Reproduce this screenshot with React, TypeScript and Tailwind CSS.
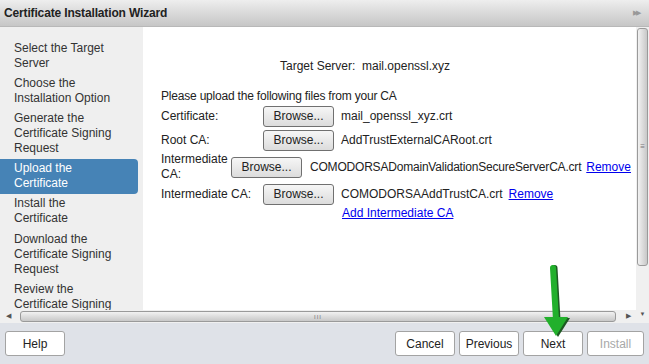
import React from 'react';

const steps: { label: string; active?: boolean }[] = [
  { label: 'Select the Target Server' },
  { label: 'Choose the Installation Option' },
  { label: 'Generate the Certificate Signing Request' },
  { label: 'Upload the Certificate', active: true },
  { label: 'Install the Certificate' },
  { label: 'Download the Certificate Signing Request' },
  { label: 'Review the Certificate Signing Request' },
];

const BrowseButton: React.FC = () => (
  <button className="h-[21px] w-[71px] shrink-0 rounded-[3px] border border-[#707070] bg-gradient-to-b from-[#f6f6f6] to-[#dcdcdc] text-[12px] text-[#222]">
    Browse...
  </button>
);

const FooterButton: React.FC<{ label: string; w: string; disabled?: boolean }> = ({ label, w, disabled }) => (
  <button
    className={`h-[25px] ${w} rounded-[3px] border border-[#a3a3a3] bg-white text-[12px] ${
      disabled ? 'text-[#a8a8a8]' : 'text-[#222]'
    }`}
  >
    {label}
  </button>
);

const App: React.FC = () => {
  return (
    <div
      className="relative flex h-[364px] w-[649px] flex-col overflow-hidden bg-white text-[12px] text-[#222]"
      style={{ fontFamily: '"Liberation Sans", Arial, sans-serif' }}
    >
      {/* Title bar */}
      <header className="flex h-[27px] shrink-0 items-center justify-between border-b border-[#b8b8b8] bg-gradient-to-b from-[#eeeeee] to-[#c6c6c6] pl-[4px] pr-[10px]">
        <h1 className="text-[12px] font-bold tracking-[-0.15px] text-[#222]">Certificate Installation Wizard</h1>
        <span className="text-[7px] tracking-[-2px] text-[#999]">▶▶</span>
      </header>

      <div className="flex min-h-0 flex-1">
        <div className="flex min-w-0 flex-1 flex-col">
          <div className="flex min-h-0 flex-1">
            {/* Steps */}
            <nav className="w-[143px] shrink-0 overflow-hidden bg-[#efefef] pr-[5px] pt-[11px]">
              {steps.map((s) => (
                <div
                  key={s.label}
                  className={`py-[2.6px] pl-[14px] pr-[20px] leading-[15px] ${
                    s.active ? 'rounded-r-[4px] bg-[#4683b6] text-white' : 'text-[#333]'
                  }`}
                >
                  {s.label}
                </div>
              ))}
            </nav>

            {/* Main content */}
            <main className="min-w-0 flex-1 overflow-hidden pl-[18px] pt-[32px] leading-[15px]">
              <p className="pl-[119px]">Target Server:&nbsp; mail.openssl.xyz</p>
              <p className="mt-[15px] tracking-[-0.2px]">Please upload the following files from your CA</p>

              <div className="flex h-[24px] items-center">
                <span className="w-[102px] shrink-0">Certificate:</span>
                <BrowseButton />
                <span className="ml-[7px]">mail_openssl_xyz.crt</span>
              </div>
              <div className="flex h-[24px] items-center">
                <span className="w-[102px] shrink-0">Root CA:</span>
                <BrowseButton />
                <span className="ml-[7px]">AddTrustExternalCARoot.crt</span>
              </div>
              <div className="flex h-[30px] items-center whitespace-nowrap">
                <span className="w-[70px] shrink-0 whitespace-normal">Intermediate CA:</span>
                <BrowseButton />
                <span className="ml-[8px] tracking-[-0.2px]">COMODORSADomainValidationSecureServerCA.crt</span>
                <a className="ml-[5px] text-[#0000ee] underline">Remove</a>
              </div>
              <div className="flex h-[24px] items-center">
                <span className="w-[102px] shrink-0">Intermediate CA:</span>
                <BrowseButton />
                <span className="ml-[7px]">COMODORSAAddTrustCA.crt</span>
                <a className="ml-[6px] text-[#0000ee] underline">Remove</a>
              </div>
              <a className="ml-[181px] text-[#0000ee] underline">Add Intermediate CA</a>
            </main>
          </div>

          {/* Horizontal scrollbar */}
          <div className="flex h-[13px] shrink-0 items-center bg-[#f0f0f0]">
            <span className="flex w-[16px] justify-center text-[7px] text-[#555]">◀</span>
            <div className="mx-[4px] flex h-[11px] flex-1 items-center justify-center rounded-[3px] border border-[#9a9a9a] bg-gradient-to-b from-[#f2f2f2] to-[#c8c8c8]">
              <span className="text-[6px] leading-none tracking-[1px] text-[#777]">III</span>
            </div>
            <span className="flex w-[16px] justify-center text-[7px] text-[#555]">▶</span>
          </div>
        </div>

        {/* Vertical scrollbar */}
        <div className="flex w-[13px] shrink-0 flex-col bg-[#f0f0f0]">
          <div className="mx-[1px] mt-[1px] flex h-[238px] items-center justify-center rounded-[3px] border border-[#9a9a9a] bg-gradient-to-r from-[#f2f2f2] to-[#c8c8c8]">
            <span className="text-[8px] leading-none text-[#777]">≡</span>
          </div>
          <div className="flex flex-1 items-end justify-center pb-[4px] text-[6px] text-[#555]">▼</div>
        </div>
      </div>

      {/* Footer */}
      <footer className="flex h-[41px] shrink-0 items-center justify-between bg-[#dfe2e8] px-[5px]">
        <FooterButton label="Help" w="w-[60px]" />
        <div className="flex gap-[4px]">
          <FooterButton label="Cancel" w="w-[60px]" />
          <FooterButton label="Previous" w="w-[60px]" />
          <FooterButton label="Next" w="w-[60px]" />
          <FooterButton label="Install" w="w-[57px]" disabled />
        </div>
      </footer>

      {/* Green annotation arrow */}
      <svg className="pointer-events-none absolute left-[540px] top-[262px]" width="34" height="80" viewBox="0 0 34 80">
        <line x1="14.5" y1="6" x2="17.5" y2="58" stroke="#1d5a22" strokeWidth="6" strokeLinecap="round" />
        <line x1="13" y1="6" x2="16" y2="58" stroke="#22b02c" strokeWidth="6" strokeLinecap="round" />
        <polygon points="5,55 30,56 18,75" fill="#1d5a22" />
        <polygon points="4,55 28,55 16,74" fill="#22b02c" />
      </svg>
    </div>
  );
};

export default App;
